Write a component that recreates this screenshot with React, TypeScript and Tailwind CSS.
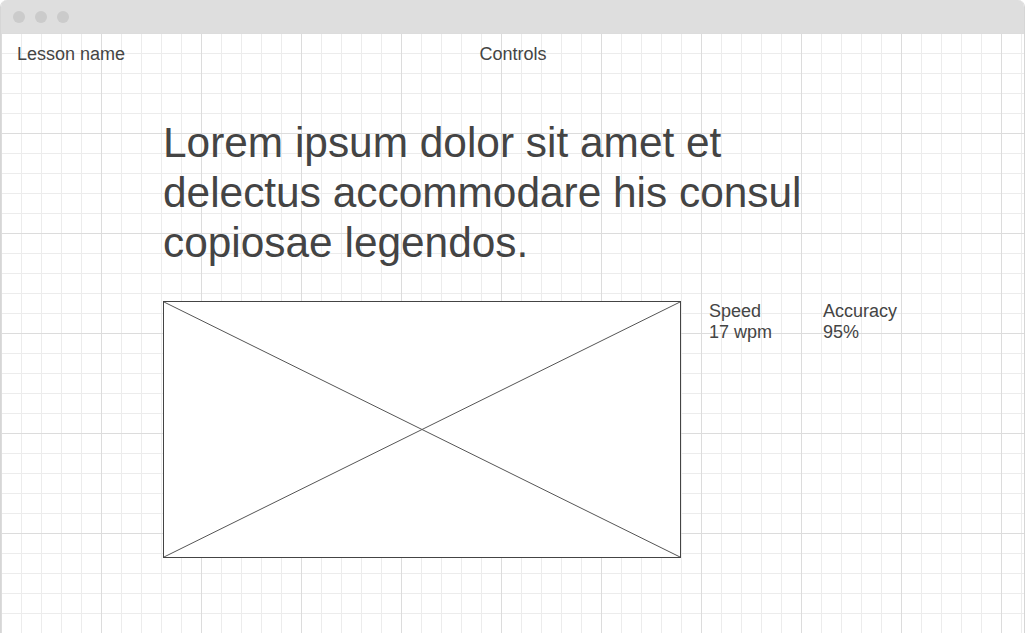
import React from 'react';

const font = { fontFamily: '"Liberation Sans", Arial, sans-serif' };

const Stat: React.FC<{ label: string; value: string; className?: string }> = ({ label, value, className }) => (
    <div className={`text-[18px] leading-[21px] text-[#444] ${className ?? ''}`}>
        <div>{label}</div>
        <div>{value}</div>
    </div>
);

const App: React.FC = () => {
    return (
        <div className="w-[1027px] h-[633px] bg-white overflow-hidden" style={font}>
            <div className="w-[1025px] h-[633px] flex flex-col rounded-t-[7px] overflow-hidden border-x border-[#d6d6d6]">
                {/* Title bar */}
                <div className="h-[33px] shrink-0 bg-[#dedede] flex items-center gap-[10px] pl-[12px]">
                    <span className="w-[12px] h-[12px] rounded-full bg-[#cbcbcb]" />
                    <span className="w-[12px] h-[12px] rounded-full bg-[#cbcbcb]" />
                    <span className="w-[12px] h-[12px] rounded-full bg-[#cbcbcb]" />
                </div>

                {/* Canvas */}
                <div className="flex-1 bg-white [background-image:linear-gradient(to_right,#dcdcdc_1px,transparent_1px),linear-gradient(to_bottom,#dcdcdc_1px,transparent_1px),linear-gradient(to_right,#ececec_1px,transparent_1px),linear-gradient(to_bottom,#ececec_1px,transparent_1px)] [background-size:100px_100px,100px_100px,20px_20px,20px_20px]">
                    <div className="grid grid-cols-[1fr_auto_1fr] pt-[11px] text-[18px] leading-[21px] text-[#444]">
                        <div className="pl-[16px]">Lesson name</div>
                        <div className="pl-[1px]">Controls</div>
                        <div />
                    </div>

                    <div className="pl-[162px] pt-[53px]">
                        <h1 className="w-[670px] text-[42.4px] leading-[50px] text-[#444]">
                            Lorem ipsum dolor sit amet et delectus accommodare his consul copiosae legendos.
                        </h1>

                        <div className="flex items-start mt-[33px]">
                            <div className="relative w-[518px] h-[257px] border border-[#444] bg-white">
                                <svg className="absolute inset-0 w-full h-full" viewBox="0 0 516 255" preserveAspectRatio="none">
                                    <line x1="0" y1="0" x2="516" y2="255" stroke="#555" strokeWidth="1" />
                                    <line x1="0" y1="255" x2="516" y2="0" stroke="#555" strokeWidth="1" />
                                </svg>
                            </div>
                            <div className="flex ml-[28px]">
                                <Stat label="Speed" value="17 wpm" className="w-[114px]" />
                                <Stat label="Accuracy" value="95%" />
                            </div>
                        </div>
                    </div>
                </div>
            </div>
        </div>
    );
};

export default App;
